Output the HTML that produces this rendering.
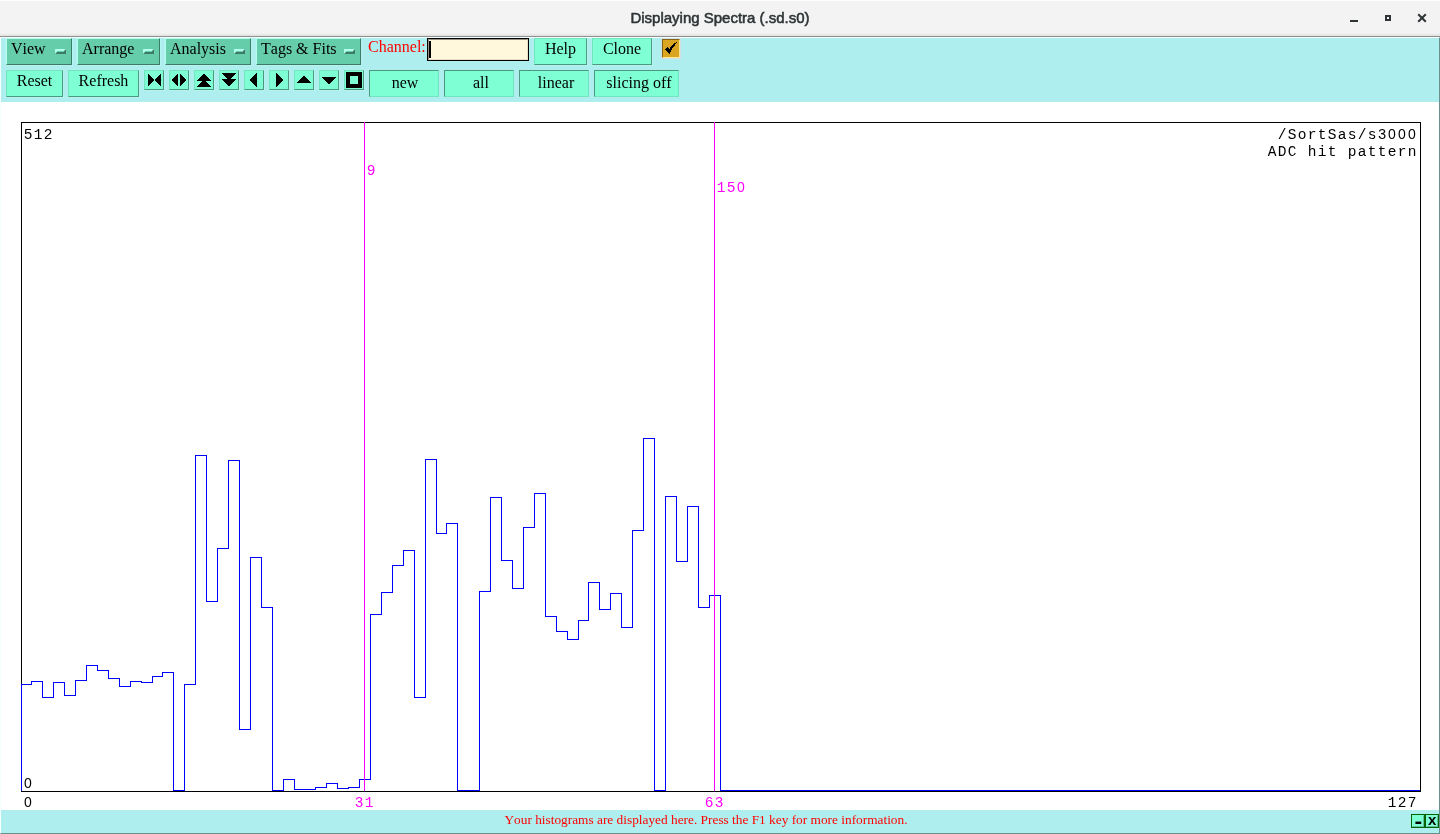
<!DOCTYPE html>
<html lang="en"><head><meta charset="utf-8"><title>Displaying Spectra (.sd.s0)</title>
<style>
html,body{margin:0;padding:0;}
body{width:1440px;height:834px;overflow:hidden;background:#fff;position:relative;font-family:"Liberation Serif",serif;font-size:16px;color:#000;font-kerning:none;}
div,span{box-sizing:border-box;}
#app{position:absolute;left:0;top:0;width:1440px;height:834px;overflow:hidden;will-change:transform;}
.abs{position:absolute;}
#title{left:0;top:0;width:1440px;height:36px;background:linear-gradient(#fefefe 0,#fefefe 1px,#f3f3f3 1px,#f3f3f3 33px,#f0f0f0 33px,#f0f0f0 34px,#eaeaea 34px,#eaeaea 35px,#e3e3e3 35px,#e3e3e3 36px);}
#title .t{position:absolute;left:0;width:1440px;text-align:center;top:9px;line-height:18px;font-family:"Liberation Sans",sans-serif;font-weight:normal;font-size:15px;-webkit-text-stroke:0.55px #2e3436;color:#2e3436;white-space:nowrap;}
#tline{left:0;top:36px;width:1440px;height:1px;background:#90908a;}
#win{left:0;top:37px;width:1440px;height:797px;background:#afeeee;border-top:1px solid #f5ffff;border-left:1px solid #f5ffff;border-right:1px solid #698f8f;border-bottom:1px solid #698f8f;}
#canvas{left:1px;top:102px;width:1438px;height:708px;background:#fff;}
.mb{top:38px;height:27px;background:#66cdaa;border:1px solid;border-color:#b2ffee #3d7b66 #3d7b66 #b2ffee;box-shadow:1px 1px 0 0 #b5f3f1,0 0 0 1px #b2f0ef;}
.mb .l{position:absolute;left:4px;top:1px;line-height:18px;white-space:nowrap;}
.ind{position:absolute;top:10px;width:11px;height:5px;background:#66cdaa;border:2px solid;border-color:#b2ffee #3d7b66 #3d7b66 #b2ffee;}
.btn{padding-top:1px;background:#7fffd4;border:1px solid;border-color:#72e5bf #4c997f #4c997f #72e5bf;box-shadow:1px 1px 0 0 #b5f3f1,0 0 0 1px #b2f0ef;text-align:center;white-space:nowrap;}
.sunk{padding-top:3px;padding-left:2px;background:#7fffd4;border:1px solid;border-color:#4c997f #72e5bf #72e5bf #4c997f;text-align:center;white-space:nowrap;}
.ib{top:70px;width:20px;height:20px;padding:0;}
.ib svg{position:absolute;left:-1px;top:-1px;}
#status{left:1px;top:810px;width:1438px;height:23px;background:#afeeee;}
#status .m{position:absolute;left:-14px;width:1438px;top:-2px;text-align:center;color:#ff0000;font-size:13.33px;line-height:23px;white-space:nowrap;}
.sb{top:814px;width:14px;height:14px;background:#7fffd4;border:1px solid #006400;}
.sb i{position:absolute;left:0;top:0;width:12px;height:12px;box-sizing:border-box;display:block;border:1px solid;border-color:#7fffd4 #62bd9f #62bd9f #7fffd4;}
.sbt{font-family:"Liberation Sans",sans-serif;font-weight:bold;line-height:20px;color:#000;}
svg text{font-family:"Liberation Mono",monospace;font-size:14.5px;}
svg .dg{font-family:"Liberation Sans",sans-serif;font-size:14px;}
</style></head>
<body><div id="app">
<div id="title" class="abs"><div class="t">Displaying Spectra (.sd.s0)</div>
<svg class="abs" style="left:1340px;top:8px" width="100" height="20" shape-rendering="crispEdges"><rect x="10" y="12" width="8" height="2" fill="#2e3436"/><rect x="46" y="8" width="4" height="4" fill="none" stroke="#2e3436" stroke-width="2"/><path d="M78.2 6.2 L85.8 13.8 M85.8 6.2 L78.2 13.8" stroke="#2e3436" stroke-width="2" fill="none" shape-rendering="geometricPrecision"/></svg></div>
<div id="tline" class="abs"></div>
<div id="win" class="abs"></div>
<div class="abs mb" style="left:6px;width:66px"><span class="l">View</span><span class="ind" style="left:48px"></span></div>
<div class="abs mb" style="left:77px;width:83px"><span class="l">Arrange</span><span class="ind" style="left:65px"></span></div>
<div class="abs mb" style="left:165px;width:86px"><span class="l">Analysis</span><span class="ind" style="left:68px"></span></div>
<div class="abs mb" style="left:256px;width:105px"><span class="l">Tags &amp; Fits</span><span class="ind" style="left:87px"></span></div>
<div class="abs" style="left:368px;top:38px;line-height:18px;color:#ff0000;white-space:nowrap">Channel:</div>
<div class="abs" style="left:427px;top:38px;width:102px;height:23px;background:#fff8dc;border:1px solid #000;"><div style="position:absolute;left:0;top:0;width:100px;height:21px;border:1px solid;border-color:#999484 #e5dfc6 #e5dfc6 #999484"></div><div style="position:absolute;left:1px;top:2px;width:2px;height:17px;background:#000"></div></div>
<div class="abs btn" style="left:534px;top:38px;width:53px;height:27px;line-height:18px"><span class="bl">Help</span></div>
<div class="abs btn" style="left:592px;top:38px;width:60px;height:27px;line-height:18px"><span class="bl">Clone</span></div>
<div class="abs" style="left:662px;top:39px;width:18px;height:19px;background:#daa520;border:1px solid;border-color:#826313 #ffe78f #ffe78f #826313;box-shadow:0 0 0 1px #d3dfe4"><svg style="position:absolute;left:-1px;top:-1px" width="18" height="19" shape-rendering="crispEdges" fill="#000"><rect x="14" y="3" width="1" height="1"/><rect x="12" y="4" width="2" height="1"/><rect x="11" y="5" width="2" height="1"/><rect x="10" y="6" width="3" height="1"/><rect x="9" y="7" width="3" height="1"/><rect x="5" y="8" width="1" height="1"/><rect x="8" y="8" width="3" height="1"/><rect x="4" y="9" width="3" height="1"/><rect x="8" y="9" width="2" height="1"/><rect x="3" y="10" width="7" height="1"/><rect x="4" y="11" width="5" height="1"/><rect x="5" y="12" width="4" height="1"/><rect x="6" y="13" width="2" height="1"/><rect x="7" y="14" width="1" height="1"/></svg></div>
<div class="abs btn" style="left:6px;top:70px;width:57px;height:27px;line-height:18px"><span class="bl">Reset</span></div>
<div class="abs btn" style="left:68px;top:70px;width:71px;height:27px;line-height:18px"><span class="bl">Refresh</span></div>
<div class="abs btn ib" style="left:144px"><svg width="20" height="20" shape-rendering="crispEdges" fill="#000"><rect x="4" y="4" width="1" height="1"/><rect x="16" y="4" width="1" height="1"/><rect x="4" y="5" width="2" height="1"/><rect x="15" y="5" width="2" height="1"/><rect x="4" y="6" width="3" height="1"/><rect x="14" y="6" width="3" height="1"/><rect x="4" y="7" width="4" height="1"/><rect x="13" y="7" width="4" height="1"/><rect x="4" y="8" width="5" height="1"/><rect x="12" y="8" width="5" height="1"/><rect x="4" y="9" width="6" height="1"/><rect x="11" y="9" width="6" height="1"/><rect x="4" y="10" width="6" height="1"/><rect x="11" y="10" width="6" height="1"/><rect x="4" y="11" width="5" height="1"/><rect x="12" y="11" width="5" height="1"/><rect x="4" y="12" width="4" height="1"/><rect x="13" y="12" width="4" height="1"/><rect x="4" y="13" width="3" height="1"/><rect x="14" y="13" width="3" height="1"/><rect x="4" y="14" width="2" height="1"/><rect x="15" y="14" width="2" height="1"/><rect x="4" y="15" width="1" height="1"/><rect x="16" y="15" width="1" height="1"/></svg></div>
<div class="abs btn ib" style="left:169px"><svg width="20" height="20" shape-rendering="crispEdges" fill="#000"><rect x="8" y="4" width="1" height="1"/><rect x="11" y="4" width="1" height="1"/><rect x="7" y="5" width="2" height="1"/><rect x="11" y="5" width="2" height="1"/><rect x="6" y="6" width="3" height="1"/><rect x="11" y="6" width="3" height="1"/><rect x="5" y="7" width="4" height="1"/><rect x="11" y="7" width="4" height="1"/><rect x="4" y="8" width="5" height="1"/><rect x="11" y="8" width="5" height="1"/><rect x="3" y="9" width="6" height="1"/><rect x="11" y="9" width="6" height="1"/><rect x="3" y="10" width="6" height="1"/><rect x="11" y="10" width="6" height="1"/><rect x="4" y="11" width="5" height="1"/><rect x="11" y="11" width="5" height="1"/><rect x="5" y="12" width="4" height="1"/><rect x="11" y="12" width="4" height="1"/><rect x="6" y="13" width="3" height="1"/><rect x="11" y="13" width="3" height="1"/><rect x="7" y="14" width="2" height="1"/><rect x="11" y="14" width="2" height="1"/><rect x="8" y="15" width="1" height="1"/><rect x="11" y="15" width="1" height="1"/></svg></div>
<div class="abs btn ib" style="left:194px"><svg width="20" height="20" shape-rendering="crispEdges" fill="#000"><rect x="9" y="4" width="2" height="1"/><rect x="8" y="5" width="4" height="1"/><rect x="7" y="6" width="6" height="1"/><rect x="6" y="7" width="8" height="1"/><rect x="5" y="8" width="10" height="1"/><rect x="4" y="9" width="12" height="1"/><rect x="3" y="10" width="14" height="1"/><rect x="8" y="11" width="4" height="1"/><rect x="7" y="12" width="6" height="1"/><rect x="6" y="13" width="8" height="1"/><rect x="5" y="14" width="10" height="1"/><rect x="4" y="15" width="12" height="1"/><rect x="3" y="16" width="14" height="1"/></svg></div>
<div class="abs btn ib" style="left:219px"><svg width="20" height="20" shape-rendering="crispEdges" fill="#000"><rect x="3" y="3" width="14" height="1"/><rect x="4" y="4" width="12" height="1"/><rect x="5" y="5" width="10" height="1"/><rect x="6" y="6" width="8" height="1"/><rect x="7" y="7" width="6" height="1"/><rect x="8" y="8" width="4" height="1"/><rect x="3" y="9" width="14" height="1"/><rect x="4" y="10" width="12" height="1"/><rect x="5" y="11" width="10" height="1"/><rect x="6" y="12" width="8" height="1"/><rect x="7" y="13" width="6" height="1"/><rect x="8" y="14" width="4" height="1"/><rect x="9" y="15" width="2" height="1"/></svg></div>
<div class="abs btn ib" style="left:244px"><svg width="20" height="20" shape-rendering="crispEdges" fill="#000"><rect x="12" y="3" width="1" height="1"/><rect x="11" y="4" width="2" height="1"/><rect x="10" y="5" width="3" height="1"/><rect x="9" y="6" width="4" height="1"/><rect x="8" y="7" width="5" height="1"/><rect x="7" y="8" width="6" height="1"/><rect x="6" y="9" width="7" height="1"/><rect x="6" y="10" width="7" height="1"/><rect x="7" y="11" width="6" height="1"/><rect x="8" y="12" width="5" height="1"/><rect x="9" y="13" width="4" height="1"/><rect x="10" y="14" width="3" height="1"/><rect x="11" y="15" width="2" height="1"/><rect x="12" y="16" width="1" height="1"/></svg></div>
<div class="abs btn ib" style="left:269px"><svg width="20" height="20" shape-rendering="crispEdges" fill="#000"><rect x="7" y="3" width="1" height="1"/><rect x="7" y="4" width="2" height="1"/><rect x="7" y="5" width="3" height="1"/><rect x="7" y="6" width="4" height="1"/><rect x="7" y="7" width="5" height="1"/><rect x="7" y="8" width="6" height="1"/><rect x="7" y="9" width="7" height="1"/><rect x="7" y="10" width="7" height="1"/><rect x="7" y="11" width="6" height="1"/><rect x="7" y="12" width="5" height="1"/><rect x="7" y="13" width="4" height="1"/><rect x="7" y="14" width="3" height="1"/><rect x="7" y="15" width="2" height="1"/><rect x="7" y="16" width="1" height="1"/></svg></div>
<div class="abs btn ib" style="left:294px"><svg width="20" height="20" shape-rendering="crispEdges" fill="#000"><rect x="9" y="6" width="2" height="1"/><rect x="8" y="7" width="4" height="1"/><rect x="7" y="8" width="6" height="1"/><rect x="6" y="9" width="8" height="1"/><rect x="5" y="10" width="10" height="1"/><rect x="4" y="11" width="12" height="1"/><rect x="3" y="12" width="14" height="1"/></svg></div>
<div class="abs btn ib" style="left:319px"><svg width="20" height="20" shape-rendering="crispEdges" fill="#000"><rect x="3" y="7" width="14" height="1"/><rect x="4" y="8" width="12" height="1"/><rect x="5" y="9" width="10" height="1"/><rect x="6" y="10" width="8" height="1"/><rect x="7" y="11" width="6" height="1"/><rect x="8" y="12" width="4" height="1"/><rect x="9" y="13" width="2" height="1"/></svg></div>
<div class="abs btn ib" style="left:344px"><svg width="20" height="20" shape-rendering="crispEdges" fill="#000"><rect x="2" y="2" width="16" height="1"/><rect x="2" y="3" width="16" height="1"/><rect x="2" y="4" width="16" height="1"/><rect x="2" y="5" width="16" height="1"/><rect x="2" y="6" width="4" height="1"/><rect x="14" y="6" width="4" height="1"/><rect x="2" y="7" width="4" height="1"/><rect x="14" y="7" width="4" height="1"/><rect x="2" y="8" width="4" height="1"/><rect x="14" y="8" width="4" height="1"/><rect x="2" y="9" width="4" height="1"/><rect x="14" y="9" width="4" height="1"/><rect x="2" y="10" width="4" height="1"/><rect x="14" y="10" width="4" height="1"/><rect x="2" y="11" width="4" height="1"/><rect x="14" y="11" width="4" height="1"/><rect x="2" y="12" width="4" height="1"/><rect x="14" y="12" width="4" height="1"/><rect x="2" y="13" width="4" height="1"/><rect x="14" y="13" width="4" height="1"/><rect x="2" y="14" width="16" height="1"/><rect x="2" y="15" width="16" height="1"/><rect x="2" y="16" width="16" height="1"/><rect x="2" y="17" width="16" height="1"/></svg></div>
<div class="abs sunk" style="left:369px;top:70px;width:70px;height:27px;line-height:18px;padding-left:2px"><span class="sl">new</span></div>
<div class="abs sunk" style="left:444px;top:70px;width:70px;height:27px;line-height:18px;padding-left:4px"><span class="sl">all</span></div>
<div class="abs sunk" style="left:519px;top:70px;width:70px;height:27px;line-height:18px;padding-left:4px"><span class="sl">linear</span></div>
<div class="abs sunk" style="left:594px;top:70px;width:85px;height:27px;line-height:18px;padding-left:5px"><span class="sl">slicing off</span></div>
<div class="abs" style="left:0;top:37px;width:1439px;height:1px;background:#f5ffff"></div>
<div id="canvas" class="abs"></div>
<svg class="abs" style="left:0;top:102px" width="1440" height="708" viewBox="0 102 1440 708"><g shape-rendering="crispEdges" fill="none"><rect x="21.5" y="122.5" width="1399" height="669" stroke="#000" stroke-width="1"/><path d="M21.5 791 V684.5 H31.5 V681.5 H42.5 V697.5 H53.5 V682.5 H64.5 V695.5 H75.5 V680.5 H86.5 V665.5 H97.5 V670.5 H108.5 V678.5 H119.5 V686.5 H130.5 V681.5 H141.5 V682.5 H152.5 V676.5 H162.5 V672.5 H173.5 V790.5 H184.5 V684.5 H195.5 V455.5 H206.5 V601.5 H217.5 V548.5 H228.5 V460.5 H239.5 V729.5 H250.5 V557.5 H261.5 V607.5 H272.5 V790.5 H283.5 V779.5 H294.5 V789.5 H304.5 V789.5 H315.5 V787.5 H326.5 V783.5 H337.5 V788.5 H348.5 V787.5 H359.5 V779.5 H370.5 V614.5 H381.5 V592.5 H392.5 V565.5 H403.5 V550.5 H414.5 V697.5 H425.5 V459.5 H436.5 V533.5 H446.5 V523.5 H457.5 V790.5 H468.5 V790.5 H479.5 V591.5 H490.5 V497.5 H501.5 V560.5 H512.5 V588.5 H523.5 V527.5 H534.5 V493.5 H545.5 V616.5 H556.5 V631.5 H567.5 V639.5 H578.5 V620.5 H588.5 V582.5 H599.5 V609.5 H610.5 V593.5 H621.5 V627.5 H632.5 V530.5 H643.5 V438.5 H654.5 V790.5 H665.5 V496.5 H676.5 V561.5 H687.5 V506.5 H698.5 V607.5 H709.5 V595.5 H720.5 V790.5 H1420" stroke="#0000ff" stroke-width="1"/><path d="M364.5 122 V791 M714.5 122 V791" stroke="#ff00ff" stroke-width="1"/></g><text y="139" fill="#000" text-anchor="middle"><tspan class="mn" x="28 38 48">512</tspan></text><text y="788" fill="#000" text-anchor="middle"><tspan class="dg" x="28">0</tspan></text><text y="807" fill="#000" text-anchor="middle"><tspan class="dg" x="28">0</tspan></text><text y="139" fill="#000" text-anchor="middle"><tspan class="mn" x="1282 1292 1302 1312 1322 1332 1342 1352 1362 1372 1382">/SortSas/s3</tspan><tspan class="dg" x="1392 1402 1412">000</tspan></text><text y="156" fill="#000" text-anchor="middle"><tspan class="mn" x="1272 1282 1292 1302 1312 1322 1332 1342 1352 1362 1372 1382 1392 1402 1412">ADC hit pattern</tspan></text><text y="807" fill="#000" text-anchor="middle"><tspan class="mn" x="1392 1402 1412">127</tspan></text><text y="175" fill="#ff00ff" text-anchor="middle"><tspan class="mn" x="371">9</tspan></text><text y="192" fill="#ff00ff" text-anchor="middle"><tspan class="mn" x="721 731">15</tspan><tspan class="dg" x="741">0</tspan></text><text y="807" fill="#ff00ff" text-anchor="middle"><tspan class="mn" x="359 369">31</tspan></text><text y="807" fill="#ff00ff" text-anchor="middle"><tspan class="mn" x="709 719">63</tspan></text></svg>
<div id="status" class="abs"><div class="m">Your histograms are displayed here. Press the F1 key for more information.</div></div>
<div class="abs sb" style="left:1411px"><i></i></div>
<div class="abs sb" style="left:1425px"><i></i></div>
<div class="abs sbt" style="left:1414.6px;top:811px;font-size:20px;transform:scaleX(1.15);transform-origin:3px 50%">-</div>
<div class="abs sbt" style="left:1428px;top:810px;font-size:15px">x</div>
</div></body></html>
